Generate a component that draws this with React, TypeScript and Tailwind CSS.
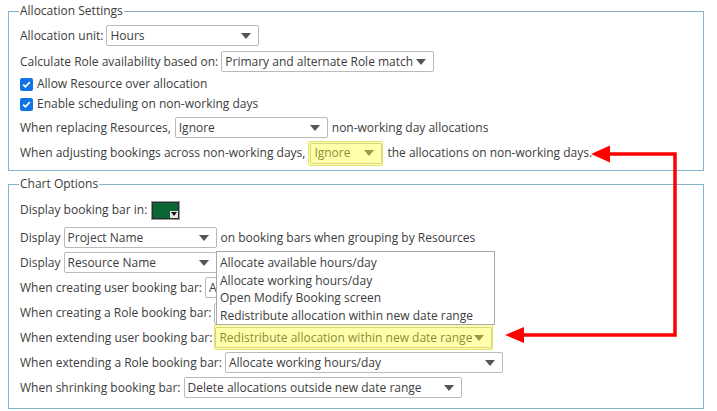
import React from "react";

function Caret() {
  return (
    <svg width="10" height="6" viewBox="0 0 10 6" className="shrink-0">
      <path d="M0 0 L10 0 L5 6 Z" fill="#555" />
    </svg>
  );
}

function Select({ w, text, hl, noCaret }: { w: string; text: string; hl?: "a" | "b"; noCaret?: boolean }) {
  return (
    <span className={`relative inline-flex shrink-0 ${w} h-[21px] items-center justify-between overflow-visible rounded-[2px] border border-[#b9b9b9] bg-white pl-[3px] ${noCaret ? "pr-0" : "pr-[7px]"}`}>
      <span className="overflow-hidden whitespace-nowrap">{text}</span>
      {!noCaret && <Caret />}
      {hl === "a" && (
        <span className="absolute -left-[3px] -right-[2px] -top-[3px] -bottom-[3px] rounded-[2px] border border-[#e5df6e] bg-[#ffff30]/40" />
      )}
      {hl === "b" && (
        <span className="absolute -left-[2px] -right-[2px] -top-[4px] -bottom-[3px] rounded-[2px] border border-[#e5df6e] bg-[#ffff30]/40" />
      )}
    </span>
  );
}

function Check() {
  return (
    <span className="inline-flex h-[13px] w-[13px] shrink-0 items-center justify-center rounded-[2px] bg-[#1174e6]">
      <svg width="11" height="11" viewBox="0 0 11 11">
        <path d="M2.2 5.6 L4.4 7.8 L8.8 3.2" fill="none" stroke="white" strokeWidth="1.8" />
      </svg>
    </span>
  );
}

function Row({ children, cls = "" }: { children: React.ReactNode; cls?: string }) {
  return <div className={`flex h-[21px] items-center whitespace-nowrap ${cls}`}>{children}</div>;
}

function Swatch() {
  return (
    <div className="ml-[4px] flex h-[19px] w-[29px] min-w-[29px] shrink-0 border border-[#9a9a9a] bg-[#2b2b2b] p-[1px]">
      <div className="relative flex-1 bg-[#0b6635]">
        <div className="absolute bottom-0 right-0 flex h-[7px] w-[8px] items-center justify-center bg-[#e6e6e6]">
          <svg width="6" height="4" viewBox="0 0 6 4"><path d="M0 0 L6 0 L3 4 Z" fill="#111" /></svg>
        </div>
      </div>
    </div>
  );
}

export default function App() {
  return (
    <div className="relative h-[411px] w-[717px] overflow-hidden bg-white pt-[2px] font-['Open_Sans',sans-serif] text-[12px] text-[#3c3c3c]">
      <fieldset className="ml-[8px] w-[696px] border border-[#86b3cc] px-[11px] pt-[5px] pb-[5px]">
        <legend className="-ml-[1px] px-[1px] leading-[18px] text-[#3c3c3c]">Allocation Settings</legend>
        <div className="flex flex-col">
          <Row>
            <span>Allocation unit:</span>
            <span className="ml-[3px]"><Select w="w-[153px]" text="Hours" /></span>
          </Row>
          <Row cls="mt-[5px]">
            <span>Calculate Role availability based on:</span>
            <span className="ml-[3px]"><Select w="w-[213px]" text="Primary and alternate Role match" /></span>
          </Row>
          <div className="mt-[4px] flex h-[16px] items-center gap-[4px]">
            <Check />
            <span>Allow Resource over allocation</span>
          </div>
          <div className="mt-[4px] flex h-[16px] items-center gap-[4px]">
            <Check />
            <span>Enable scheduling on non-working days</span>
          </div>
          <Row cls="mt-[5px]">
            <span>When replacing Resources,</span>
            <span className="ml-[4px]"><Select w="w-[153px]" text="Ignore" /></span>
            <span className="ml-[4px]">non-working day allocations</span>
          </Row>
          <div className="mt-[3px] flex h-[24px] items-center whitespace-nowrap">
            <span>When adjusting bookings across non-working days,</span>
            <span className="ml-[5px]"><Select w="w-[72px]" text="Ignore" hl="a" /></span>
            <span className="ml-[5px]">the allocations on non-working days.</span>
          </div>
        </div>
      </fieldset>

      <fieldset className="ml-[8px] mt-[4px] w-[696px] border border-[#86b3cc] px-[11px] pt-[7px] pb-[10px]">
        <legend className="-ml-[1px] px-[1px] leading-[18px] text-[#3c3c3c]">Chart Options</legend>
        <div className="flex flex-col">
          <div className="flex h-[20px] items-center whitespace-nowrap">
            <span>Display booking bar in:</span>
            <Swatch />
          </div>
          <Row cls="mt-[7px]">
            <span>Display</span>
            <span className="ml-[3px]"><Select w="w-[153px]" text="Project Name" /></span>
            <span className="ml-[4px]">on booking bars when grouping by Resources</span>
          </Row>
          <Row cls="mt-[4px]">
            <span>Display</span>
            <span className="ml-[3px]"><Select w="w-[153px]" text="Resource Name" /></span>
          </Row>
          <Row cls="mt-[4px]">
            <span>When creating user booking bar:</span>
            <span className="ml-[3px]"><Select w="w-[12px]" text="A" noCaret /></span>
          </Row>
          <Row cls="mt-[4px]">
            <span>When creating a Role booking bar:</span>
            <span className="ml-[3px]"><Select w="w-[6px]" text="" noCaret /></span>
          </Row>
          <Row cls="mt-[4px]">
            <span>When extending user booking bar:</span>
            <span className="ml-[3px]"><Select w="w-[277px]" text="Redistribute allocation within new date range" hl="b" /></span>
          </Row>
          <Row cls="mt-[4px]">
            <span>When extending a Role booking bar:</span>
            <span className="ml-[3px]"><Select w="w-[278px]" text="Allocate working hours/day" /></span>
          </Row>
          <Row cls="mt-[4px]">
            <span>When shrinking booking bar:</span>
            <span className="ml-[3px]"><Select w="w-[278px]" text="Delete allocations outside new date range" /></span>
          </Row>
        </div>
      </fieldset>

      <div className="absolute left-[216px] top-[251px] flex h-[74px] w-[279px] flex-col border border-[#a8a8a8] bg-white pl-[3px] pt-[2px] leading-[17.5px]">
        <span>Allocate available hours/day</span>
        <span>Allocate working hours/day</span>
        <span>Open Modify Booking screen</span>
        <span>Redistribute allocation within new date range</span>
      </div>

      <svg className="pointer-events-none absolute left-0 top-0" width="717" height="411" viewBox="0 0 717 411">
        <polyline points="605,154 675,154 675,335 520,335" fill="none" stroke="#ff0000" strokeWidth="3.5" />
        <polygon points="591,154 610,145.5 610,162.5" fill="#ff0000" />
        <polygon points="505,335 524,327 524,343" fill="#ff0000" />
      </svg>
    </div>
  );
}
